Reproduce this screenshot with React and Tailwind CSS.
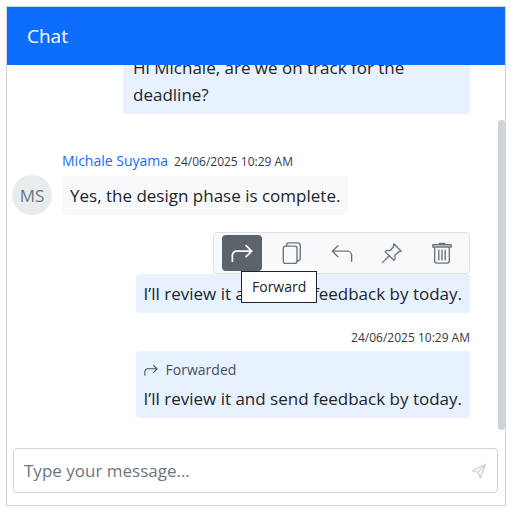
const iconProps = {
  viewBox: "0 0 24 24",
  fill: "none",
  stroke: "currentColor",
  strokeLinecap: "round",
  strokeLinejoin: "round",
  "aria-hidden": true,
};

function ForwardIcon({ className, strokeWidth = 1.9 }) {
  return (
    <svg {...iconProps} strokeWidth={strokeWidth} className={className}>
      <path d="M1.500 21v-6.500a4.500 4.500 0 0 1 4.500-4.500H22.500M16.500 4l6 6-6 6" />
    </svg>
  );
}

function ReplyIcon({ className }) {
  return (
    <svg {...iconProps} strokeWidth="1.5" className={className}>
      <path d="M22.500 21v-6.500a4.500 4.500 0 0 0-4.500-4.500H1.500M7.500 4l-6 6 6 6" />
    </svg>
  );
}

function CopyIcon({ className }) {
  return (
    <svg {...iconProps} strokeWidth="1.5" className={className}>
      <rect x="2.500" y="4.500" width="15" height="19" rx="2.500" />
      <path d="M6 4.500V3.500A2.500 2.500 0 0 1 8.500 1H18a3 3 0 0 1 3 3v14a2.500 2.500 0 0 1-2.500 2.500h-1" />
    </svg>
  );
}

function PinIcon({ className }) {
  return (
    <svg {...iconProps} strokeWidth="1.5" className={className}>
      <path d="M14 2l8 8-3 .8-4 4c.7 2.200.4 3.800-1 5.200L4.500 10.500c1.400-1.400 3.200-1.700 5.200-1L13.500 5.500zM9 15l-7.500 7.500" />
    </svg>
  );
}

function TrashIcon({ className }) {
  return (
    <svg {...iconProps} strokeWidth="1.5" className={className}>
      <path d="M2 3h20v2.500H2zM9 3V1.500h6V3M4 5.500v15a2.500 2.500 0 0 0 2.500 2.500h11a2.500 2.500 0 0 0 2.500-2.500v-15M8.500 9v10.500M12 9v10.500M15.500 9v10.500" />
    </svg>
  );
}

function SendIcon({ className }) {
  return (
    <svg {...iconProps} strokeWidth="2.2" className={className}>
      <path d="M22 2L2 11.500l8.500 2.500L14 22zM22 2L10.500 14" />
    </svg>
  );
}

const actions = [
  { label: "Forward", Icon: ForwardIcon },
  { label: "Copy", Icon: CopyIcon },
  { label: "Reply", Icon: ReplyIcon },
  { label: "Pin", Icon: PinIcon },
  { label: "Delete", Icon: TrashIcon },
];

function Toolbar() {
  return (
    <div role="toolbar" aria-label="Message actions" className="flex h-[42px] items-center gap-2.5 rounded border border-[#dee2e6] bg-[#f8f9fa] pr-[7px] pl-2">
      {actions.map(({ label, Icon }, i) => (
        <div key={label} className="relative">
          <button
            type="button"
            aria-label={label}
            className={
              i === 0
                ? "flex h-9 w-10 items-center justify-center rounded bg-[#5c636a] text-white"
                : "flex h-9 w-10 items-center justify-center rounded text-[#6c757d]"
            }
          >
            <Icon className="size-[22px]" />
          </button>
          {i === 0 && (
            <div role="tooltip" className="absolute top-9 left-[19px] z-10 flex h-8 items-center border border-[#212529] bg-white px-2.5 text-sm text-[#212529]">
              {label}
            </div>
          )}
        </div>
      ))}
    </div>
  );
}

export default function App() {
  return (
    <div className="h-screen pt-1.5 pr-2.5 pb-2.5 pl-1.5 font-['Open_Sans','Noto_Sans',sans-serif] text-[#212529]">
      <main className="flex h-full flex-col border border-[#ced4da] bg-white">
        <header className="flex h-[58px] shrink-0 items-center bg-[#0d6efd] px-5">
          <h1 className="text-[19px] text-white">Chat</h1>
        </header>

        <section aria-label="Messages" className="flex min-h-0 flex-1">
          <div className="flex min-w-0 flex-1 flex-col justify-end overflow-hidden pr-7 pb-6 pl-[5px] text-[17px] leading-[27px]">
            <p className="ml-auto w-[347px] shrink-0 rounded bg-[#e7f1ff] px-2.5 py-1.5">
              Hi Michale, are we on track for the deadline?
            </p>

            <div className="mt-[35px] flex shrink-0 items-end gap-2.5">
              <div className="flex size-10 items-center justify-center rounded-full bg-[#e9ecef] text-[#6c757d]">MS</div>
              <div>
                <div className="flex items-baseline gap-1.5 pb-0.5 leading-6">
                  <span className="text-sm leading-6 text-[#0d6efd]">Michale Suyama</span>
                  <time className="text-xs leading-6 text-[#343a40]">24/06/2025 10:29 AM</time>
                </div>
                <p className="w-fit rounded bg-[#f8f9fa] px-2 py-1.5">Yes, the design phase is complete.</p>
              </div>
            </div>

            <div className="mt-[17px] flex shrink-0 flex-col items-end">
              <Toolbar />
              <p className="rounded bg-[#e7f1ff] px-2 py-1.5">I’ll review it and send feedback by today.</p>
            </div>

            <div className="mt-[15px] flex shrink-0 flex-col items-end">
              <time className="pb-[3px] text-xs leading-5 text-[#343a40]">24/06/2025 10:29 AM</time>
              <div className="rounded bg-[#e7f1ff] px-2 py-1.5">
                <div className="flex items-center gap-2 pb-0.5 text-sm leading-[26px] text-[#495057]">
                  <ForwardIcon className="size-[14px]" strokeWidth={1.8} />
                  <span>Forwarded</span>
                </div>
                <p>I’ll review it and send feedback by today.</p>
              </div>
            </div>
          </div>
          <div className="flex w-[7px] flex-col justify-end pb-3">
            <div className="h-[310px] rounded-full bg-[#ced4da]" />
          </div>
        </section>

        <form className="shrink-0 pt-1.5 pr-[7px] pb-3 pl-1.5">
          <div className="flex h-[45px] items-center rounded border border-[#ced4da] pr-2.5">
            <input
              type="text"
              aria-label="Type your message"
              placeholder="Type your message…"
              className="h-full min-w-0 flex-1 bg-transparent pl-2.5 text-[17px] outline-none placeholder:text-[#6c757d]"
            />
            <button type="button" aria-label="Send" className="text-[#ced4da]">
              <SendIcon className="size-4" />
            </button>
          </div>
        </form>
      </main>
    </div>
  );
}
